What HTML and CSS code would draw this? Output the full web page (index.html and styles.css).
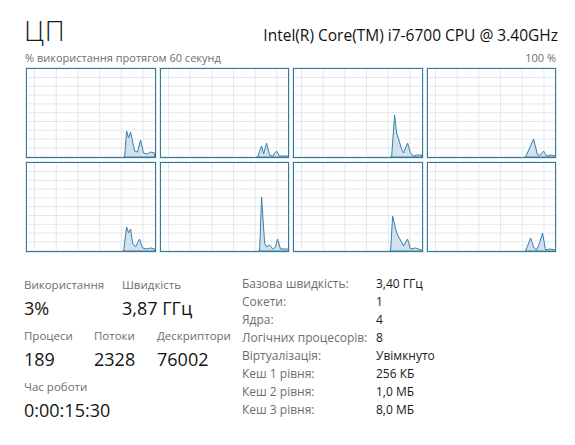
FILE: index.html
```html
<!DOCTYPE html>
<html lang="uk">
<head>
<meta charset="utf-8">
<title>ЦП</title>
<link rel="stylesheet" href="styles.css">
</head>
<body>
<div class="page">
  <header class="header">
    <h1 class="title">ЦП</h1>
    <div class="cpu-name">Intel(R) Core(TM) i7-6700 CPU @ 3.40GHz</div>
  </header>
  <div class="axis">
    <span>% використання протягом 60 секунд</span>
    <span>100 %</span>
  </div>
  <div class="graphs">
    <div class="cell"><svg viewBox="0 0 128 88" preserveAspectRatio="none"><polygon points="97,88 98,88 100,62 102,69 104,63 108,82 111,83 114,71 117,84 121,85 124,83 128,84 128,88"/></svg></div>
    <div class="cell"><svg viewBox="0 0 128 88" preserveAspectRatio="none"><polygon points="96,88 97,88 101,77 103,85 106,74 109,86 112,87 116,82 119,87 128,87 128,88"/></svg></div>
    <div class="cell"><svg viewBox="0 0 128 88" preserveAspectRatio="none"><polygon points="97,88 98,88 101,46 103,64 105,70 108,80 110,84 114,74 117,84 120,87 124,86 128,86 128,88"/></svg></div>
    <div class="cell"><svg viewBox="0 0 128 88" preserveAspectRatio="none"><polygon points="97,88 98,88 106,70 110,86 113,86 116,82 119,87 124,86 128,87 128,88"/></svg></div>
    <div class="cell"><svg viewBox="0 0 128 88" preserveAspectRatio="none"><polygon points="96,88 97,88 100,64 102,70 104,66 106,80 109,84 113,76 116,85 120,86 124,85 128,86 128,88"/></svg></div>
    <div class="cell"><svg viewBox="0 0 128 88" preserveAspectRatio="none"><polygon points="98,88 99,88 101,34 104,80 106,84 109,82 112,86 115,84 117,76 120,86 128,86 128,88"/></svg></div>
    <div class="cell"><svg viewBox="0 0 128 88" preserveAspectRatio="none"><polygon points="96,88 97,88 99,53 102,66 104,72 108,79 110,83 114,76 117,86 122,85 128,87 128,88"/></svg></div>
    <div class="cell"><svg viewBox="0 0 128 88" preserveAspectRatio="none"><polygon points="97,88 98,88 103,75 106,84 109,87 112,80 115,70 118,87 122,86 128,87 128,88"/></svg></div>
  </div>
  <div class="details">
    <div class="stats">
      <div class="stat-row">
        <div class="stat stat-usage"><div class="label">Використання</div><div class="value">3%</div></div>
        <div class="stat"><div class="label">Швидкість</div><div class="value">3,87 ГГц</div></div>
      </div>
      <div class="stat-row">
        <div class="stat stat-proc"><div class="label">Процеси</div><div class="value">189</div></div>
        <div class="stat stat-threads"><div class="label">Потоки</div><div class="value">2328</div></div>
        <div class="stat"><div class="label">Дескриптори</div><div class="value">76002</div></div>
      </div>
      <div class="stat-row">
        <div class="stat"><div class="label">Час роботи</div><div class="value">0:00:15:30</div></div>
      </div>
    </div>
    <dl class="specs">
      <dt>Базова швидкість:</dt><dd>3,40 ГГц</dd>
      <dt>Сокети:</dt><dd>1</dd>
      <dt>Ядра:</dt><dd>4</dd>
      <dt>Логічних процесорів:</dt><dd>8</dd>
      <dt>Віртуалізація:</dt><dd>Увімкнуто</dd>
      <dt>Кеш 1 рівня:</dt><dd>256 КБ</dd>
      <dt>Кеш 2 рівня:</dt><dd>1,0 МБ</dd>
      <dt>Кеш 3 рівня:</dt><dd>8,0 МБ</dd>
    </dl>
  </div>
</div>
</body>
</html>
```
FILE: styles.css
```css
* { box-sizing: border-box; }
html, body { margin: 0; padding: 0; background: #fff; }
body {
  font-family: "Open Sans", "Noto Sans", "DejaVu Sans", sans-serif;
  color: #1a1a1a;
}
.page {
  width: 575px;
  height: 445px;
  padding: 0 17px 0 24px;
  overflow: hidden;
}
.header {
  display: flex;
  justify-content: space-between;
  align-items: baseline;
  padding-top: 16px;
}
.title {
  margin: 0;
  font-size: 28px;
  font-weight: 300;
  line-height: 28px;
  letter-spacing: 0.5px;
}
.cpu-name {
  font-size: 15.5px;
  line-height: 18px;
  color: #111;
}
.axis {
  display: flex;
  justify-content: space-between;
  margin: 7px 2px 0 1px;
  font-size: 11px;
  line-height: 14px;
  color: #6e6e6e;
}
.graphs {
  display: grid;
  grid-template-columns: repeat(4, 1fr);
  grid-auto-rows: 90px;
  gap: 4px;
  width: 530px;
  margin: 3px 0 0 2px;
}
.cell {
  border: 1px solid #40768e;
  box-shadow: 0 0 0 1px #d7eef6;
  background-color: #fff;
  background-image:
    linear-gradient(to right, #e1e8ee 1px, transparent 1px),
    linear-gradient(to bottom, #e1e8ee 1px, transparent 1px);
  background-size: 21.7px 100%, 100% 8.8px;
  background-position: 7px 0, 0 8px;
}
.cell svg {
  display: block;
  width: 100%;
  height: 100%;
}
.cell polygon {
  fill: #cfe3ef;
  stroke: #3f7fa6;
  stroke-width: 1;
  vector-effect: non-scaling-stroke;
  stroke-linejoin: round;
}
.details {
  display: flex;
  margin-top: 24px;
}
.stats {
  width: 218px;
}
.stat-row {
  display: flex;
  margin-bottom: 4px;
}
.stat-usage { width: 98px; }
.stat-proc { width: 70px; }
.stat-threads { width: 63px; }
.label {
  font-size: 11.5px;
  line-height: 17px;
  color: #6e6e6e;
}
.value {
  font-size: 18px;
  line-height: 30px;
  color: #141414;
}
.specs {
  display: grid;
  grid-template-columns: 134px auto;
  grid-auto-rows: 18px;
  margin: -1px 0 0;
  font-size: 12px;
  line-height: 18px;
}
.specs dt { color: #6e6e6e; }
.specs dd { margin: 0; color: #1a1a1a; }
```
